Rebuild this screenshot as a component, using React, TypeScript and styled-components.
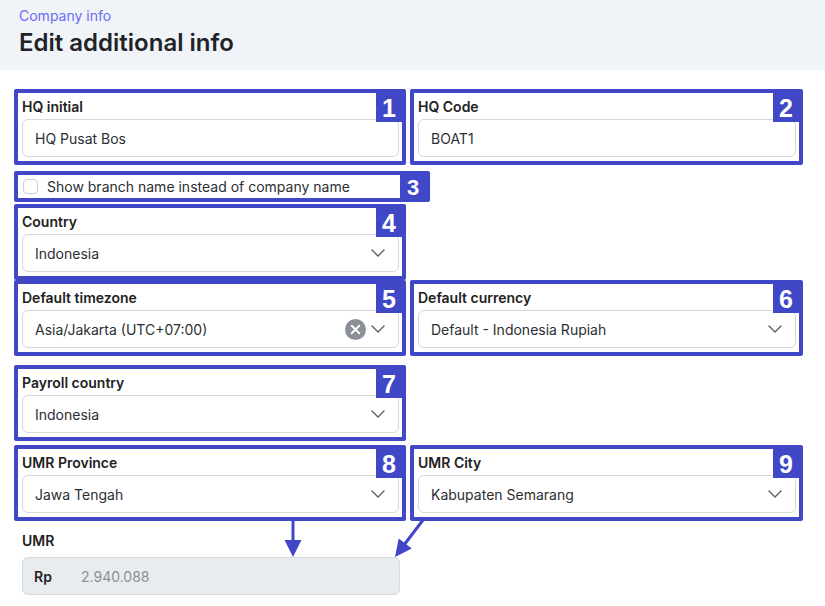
import React from 'react';
import styled, { createGlobalStyle } from 'styled-components';

const BLUE = '#4048c8';

const GlobalStyle = createGlobalStyle`
	body {
		margin: 0;
		background: #ffffff;
		font-family: Inter, "Noto Sans", sans-serif;
		color: #222;
	}
`;

function Chevron() {
	return (
		<svg width="14" height="8" viewBox="0 0 14 8" fill="none">
			<polyline points="1,1 7,7 13,1" stroke="#5a5f66" strokeWidth="1.4" strokeLinecap="round" strokeLinejoin="round" />
		</svg>
	);
}

function ClearIcon() {
	return (
		<svg width="21" height="21" viewBox="0 0 21 21">
			<circle cx="10.5" cy="10.5" r="10.5" fill="#8a8f98" />
			<path d="M6.8 6.8 L14.2 14.2 M14.2 6.8 L6.8 14.2" stroke="#ffffff" strokeWidth="2" strokeLinecap="round" />
		</svg>
	);
}

type FieldProps = {
	mark: number;
	label: string;
	value: string;
	select?: boolean;
	clearable?: boolean;
	width: number;
};

function MarkedField({ mark, label, value, select, clearable, width }: FieldProps) {
	return (
		<MarkBox $width={width}>
			<Badge>{mark}</Badge>
			<Label>{label}</Label>
			<Input>
				<span>{value}</span>
				{select && (
					<Controls>
						{clearable && <ClearIcon />}
						<Chevron />
					</Controls>
				)}
			</Input>
		</MarkBox>
	);
}

export default function App() {
	return (
		<Page>
			<GlobalStyle />
			<Header>
				<Crumb>Company info</Crumb>
				<Title>Edit additional info</Title>
			</Header>
			<Form>
				<Row $top={0}>
					<MarkedField mark={1} label="HQ initial" value="HQ Pusat Bos" width={392} />
					<MarkedField mark={2} label="HQ Code" value="BOAT1" width={393} />
				</Row>
				<Row $top={6}>
					<CheckBox $width={416}>
						<Badge $short>3</Badge>
						<Tick />
						<CheckText>Show branch name instead of company name</CheckText>
					</CheckBox>
				</Row>
				<Row $top={2}>
					<MarkedField mark={4} label="Country" value="Indonesia" select width={392} />
				</Row>
				<Row $top={0}>
					<MarkedField mark={5} label="Default timezone" value="Asia/Jakarta (UTC+07:00)" select clearable width={392} />
					<MarkedField mark={6} label="Default currency" value="Default - Indonesia Rupiah" select width={393} />
				</Row>
				<Row $top={9}>
					<MarkedField mark={7} label="Payroll country" value="Indonesia" select width={392} />
				</Row>
				<Row $top={4}>
					<MarkedField mark={8} label="UMR Province" value="Jawa Tengah" select width={392} />
					<MarkedField mark={9} label="UMR City" value="Kabupaten Semarang" select width={393} />
				</Row>
				<PlainField>
					<Label>UMR</Label>
					<ReadOnly>
						<Prefix>Rp</Prefix>
						<Muted>2.940.088</Muted>
					</ReadOnly>
				</PlainField>
			</Form>
			<Arrows width="825" height="606" viewBox="0 0 825 606">
				<line x1="293" y1="520" x2="293" y2="543" stroke={BLUE} strokeWidth="3" />
				<polygon points="284.5,540 301.5,540 293,557" fill={BLUE} />
				<line x1="423" y1="520" x2="404" y2="545" stroke={BLUE} strokeWidth="3" />
				<polygon points="411.8,548.5 398.7,538.4 395,557" fill={BLUE} />
			</Arrows>
		</Page>
	);
}

const Page = styled.div`
	position: relative;
	width: 825px;
	height: 606px;
	overflow: hidden;
`;

const Header = styled.div`
	height: 70px;
	box-sizing: border-box;
	background: #f0f3f8;
	padding: 6px 19px 0;
`;

const Crumb = styled.div`
	font-size: 14px;
	line-height: 20px;
	color: #6b6ef2;
`;

const Title = styled.div`
	font-size: 24px;
	line-height: 34px;
	font-weight: 600;
	color: #1f2328;
`;

const Form = styled.div`
	display: flex;
	flex-direction: column;
	padding: 19px 0 0 14px;
`;

const Row = styled.div<{ $top: number }>`
	display: flex;
	gap: 4px;
	margin-top: ${(p) => p.$top}px;
`;

const MarkBox = styled.div<{ $width: number }>`
	position: relative;
	width: ${(p) => p.$width}px;
	box-sizing: border-box;
	border: 4px solid ${BLUE};
	border-radius: 2px;
	padding: 4px 3px 4px 4px;
`;

const Badge = styled.div<{ $short?: boolean }>`
	position: absolute;
	top: 0;
	right: 0;
	width: 26px;
	height: ${(p) => (p.$short ? '23px' : '29px')};
	background: ${BLUE};
	color: #ffffff;
	font-family: "Liberation Sans", Arial, sans-serif;
	font-weight: bold;
	font-size: ${(p) => (p.$short ? '22px' : '25px')};
	line-height: ${(p) => (p.$short ? '25px' : '30px')};
	text-align: center;
	z-index: 1;
`;

const Label = styled.div`
	font-size: 14px;
	line-height: 20px;
	font-weight: 600;
	color: #222;
	margin-bottom: 2px;
`;

const Input = styled.div`
	height: 38px;
	box-sizing: border-box;
	border: 1px solid #d3d7de;
	border-radius: 6px;
	display: flex;
	align-items: center;
	justify-content: space-between;
	padding: 0 13px 0 12px;
	font-size: 14px;
	color: #2b2f33;
	background: #ffffff;
`;

const Controls = styled.div`
	display: flex;
	align-items: center;
	gap: 5px;
`;

const CheckBox = styled.div<{ $width: number }>`
	position: relative;
	width: ${(p) => p.$width}px;
	height: 31px;
	box-sizing: border-box;
	border: 4px solid ${BLUE};
	border-radius: 2px;
	display: flex;
	align-items: center;
	gap: 9px;
	padding-left: 5px;
`;

const Tick = styled.div`
	width: 15px;
	height: 15px;
	box-sizing: border-box;
	border: 1px solid #c9cdd4;
	border-radius: 4px;
	background: #ffffff;
`;

const CheckText = styled.span`
	font-size: 14px;
	color: #2b2f33;
`;

const PlainField = styled.div`
	width: 378px;
	margin: 10px 0 0 8px;
`;

const ReadOnly = styled.div`
	height: 38px;
	box-sizing: border-box;
	margin-top: 6px;
	border: 1px solid #d3d7de;
	border-radius: 6px;
	background: #e9ecef;
	display: flex;
	align-items: center;
	padding-left: 11px;
	font-size: 14px;
`;

const Prefix = styled.span`
	font-weight: 600;
	color: #222;
	width: 47px;
`;

const Muted = styled.span`
	color: #8a9099;
`;

const Arrows = styled.svg`
	position: absolute;
	left: 0;
	top: 0;
	pointer-events: none;
`;
